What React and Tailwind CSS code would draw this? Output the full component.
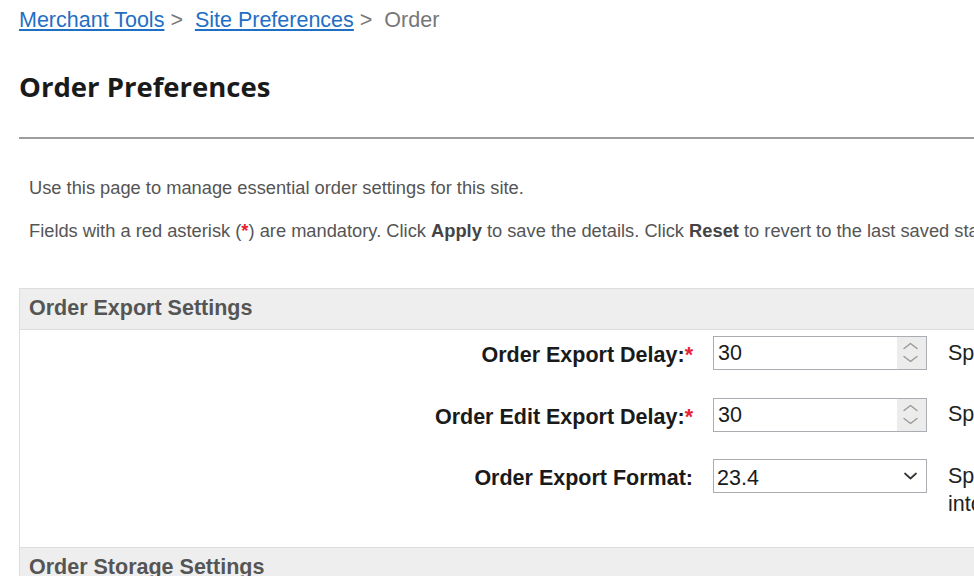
import React from "react";

function Spinner() {
  return (
    <div className="w-[29px] bg-[#ececec] shrink-0">
      <svg width="29" height="32" viewBox="0 0 29 32" fill="none">
        <polyline points="7,11.5 13.5,6.5 20,11.5" stroke="#999" strokeWidth="1.4" strokeLinecap="round" strokeLinejoin="round" />
        <polyline points="7,19.5 13.5,24.5 20,19.5" stroke="#999" strokeWidth="1.4" strokeLinecap="round" strokeLinejoin="round" />
      </svg>
    </div>
  );
}

function NumberInput({ value }) {
  return (
    <div className="h-[34px] w-[214px] border border-[#a9adb1] bg-white flex">
      <div className="flex-1 pl-[4px] pt-[3px] text-[21.5px] leading-[26px] text-[#1a1a1a]">{value}</div>
      <Spinner />
    </div>
  );
}

function SelectInput({ value }) {
  return (
    <div className="h-[34px] w-[214px] border border-[#a9adb1] bg-white flex">
      <div className="flex-1 pl-[3px] pt-[5px] text-[21.5px] leading-[26px] text-[#1a1a1a]">{value}</div>
      <div className="w-[29px] shrink-0 flex justify-center">
        <svg width="29" height="32" viewBox="0 0 29 32" fill="none">
          <polyline points="8,13.5 13.5,18.5 19,13.5" stroke="#333" strokeWidth="1.7" strokeLinecap="round" strokeLinejoin="round" />
        </svg>
      </div>
    </div>
  );
}

function Label({ children, required }) {
  return (
    <div className="text-right pt-[6px] text-[21.5px] leading-[26px] font-bold text-[#1a1a1a] whitespace-nowrap">
      {children}
      {required && <span className="text-[#e8232f]">*</span>}
    </div>
  );
}

function Desc({ children }) {
  return (
    <div className="pl-[1px] pt-[2.5px] text-[21.5px] leading-[28px] text-[#222] whitespace-nowrap">
      {children}
    </div>
  );
}

function SectionHeader({ children, top }) {
  return (
    <div className={(top ? "" : "border-t ") + "bg-[#eeeeee] border-b border-[#dddddd] pt-[6px] pb-[8px] pl-[9px]"}>
      <div className="text-[21.5px] leading-[26px] font-bold text-[#555]">{children}</div>
    </div>
  );
}

export default function App() {
  return (
    <div className="w-[974px] h-[576px] overflow-hidden bg-white font-['Liberation_Sans',Arial,sans-serif]">
      <div className="w-[1400px] pl-[19px]">
        <div className="pt-[8px] text-[21.5px] leading-[24px] text-[#777] whitespace-nowrap">
          <a href="#" className="text-[#1f6fc5] underline">Merchant Tools</a>
          <span>{" > \u00a0"}</span>
          <a href="#" className="text-[#1f6fc5] underline">Site Preferences</a>
          <span>{" > \u00a0"}</span>
          <span>Order</span>
        </div>

        <h1 className="mt-[39px] font-['Open_Sans',sans-serif] text-[27.5px] leading-[32px] font-bold text-[#1a1a1a]">
          Order Preferences
        </h1>

        <div className="mt-[34px] border-t-2 border-[#9d9d9d]" />

        <div className="pl-[10px] text-[18.3px] leading-[22px] text-[#555] whitespace-nowrap">
          <p className="mt-[38px]">Use this page to manage essential order settings for this site.</p>
          <p className="mt-[21px]">
            Fields with a red asterisk (<span className="text-[#e8232f] font-bold">*</span>) are mandatory. Click{" "}
            <span className="font-bold text-[#444]">Apply</span> to save the details. Click{" "}
            <span className="font-bold text-[#444]">Reset</span> to revert to the last saved state.
          </p>
        </div>

        <div className="mt-[46px] border border-[#dddddd]">
          <SectionHeader top>Order Export Settings</SectionHeader>
          <div className="pt-[6px] pb-[29.5px] grid grid-cols-[673px_214px_1fr] gap-x-[20px] gap-y-[27.5px] items-start">
            <Label required>Order Export Delay:</Label>
            <NumberInput value="30" />
            <Desc>Specify the number of minutes to wait before an order is exported.</Desc>

            <Label required>Order Edit Export Delay:</Label>
            <NumberInput value="30" />
            <Desc>Specify the number of minutes to wait before an edited order is exported.</Desc>

            <Label>Order Export Format:</Label>
            <SelectInput value="23.4" />
            <Desc>
              Specify the version of the order export format to be used
              <br />
              into which orders are exported.
            </Desc>
          </div>
          <SectionHeader>Order Storage Settings</SectionHeader>
          <div className="h-[200px]" />
        </div>
      </div>
    </div>
  );
}
